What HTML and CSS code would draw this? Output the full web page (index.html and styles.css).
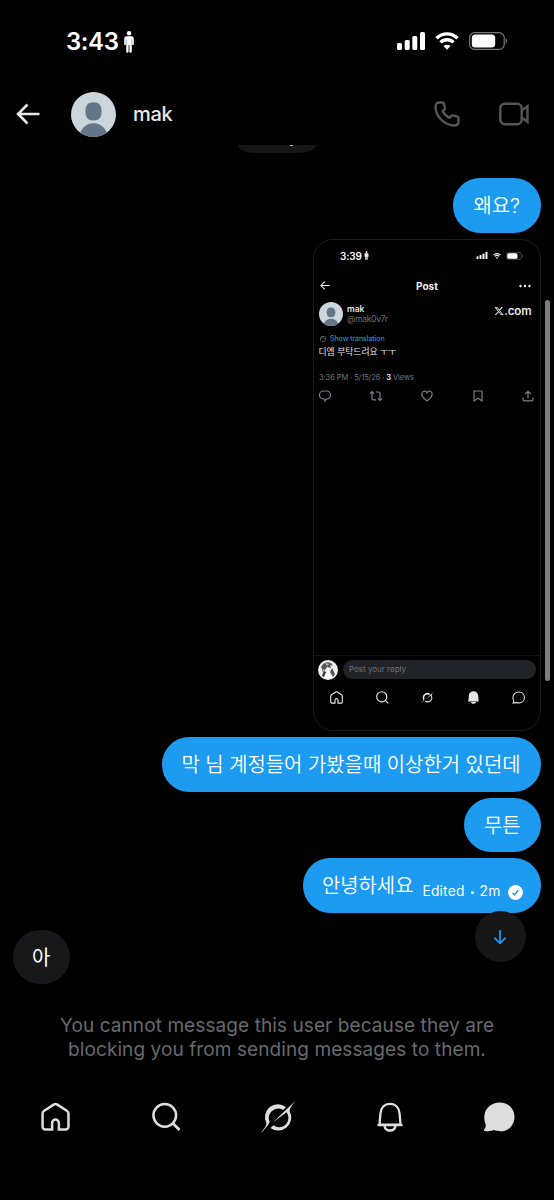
FILE: index.html
```html
<!DOCTYPE html>
<html lang="ko">
<head>
<meta charset="utf-8">
<title>mak</title>
<link rel="stylesheet" href="styles.css">
</head>
<body>
<svg class="defs" aria-hidden="true">
  <symbol id="person" viewBox="0 0 12 22"><circle cx="6" cy="2.3" r="2.2"/><path d="M3.6 5.2h4.8a2.4 2.4 0 0 1 2.4 2.4v5.6a.8.8 0 0 1-1.7 0V8.4h-.3V20.600a1 1 0 0 1-2.400 0v-6.600h-.8v6.600a1 1 0 0 1-2.400 0V8.400h-.3v4.800a.8.8 0 0 1-1.700 0V7.600a2.400 2.400 0 0 1 2.400-2.400z"/></symbol>
  <symbol id="signal" viewBox="0 0 28 18"><rect x="0" y="11" width="5" height="7" rx="1.5"/><rect x="7.700" y="8" width="5" height="10" rx="1.500"/><rect x="15.300" y="4" width="5" height="14" rx="1.500"/><rect x="23" y="0" width="5" height="18" rx="1.500"/></symbol>
  <symbol id="wifi" viewBox="0 0 24 18"><path d="M1.500 6.200a15 15 0 0 1 21 0M5.500 10.400a9.300 9.300 0 0 1 13 0" fill="none" stroke="currentColor" stroke-width="3.300"/><path d="M12 17.700l-3.500-3.600a5 5 0 0 1 7 0z"/></symbol>
  <symbol id="battery" viewBox="0 0 39 18"><rect x=".6" y=".6" width="34.600" height="16.800" rx="5" fill="none" stroke="#777" stroke-width="1.200"/><rect x="2.800" y="2.600" width="23.400" height="12.800" rx="3.500"/><path d="M36.700 6v6c1.700-.7 1.700-5.300 0-6z" fill="#777"/></symbol>
  <symbol id="back" viewBox="0 0 24 22"><path d="M23.500 11H2.200M11.500 1.500L2 11l9.500 9.500" fill="none" stroke="currentColor" stroke-width="2.500"/></symbol>
  <symbol id="avatar" viewBox="0 0 46 46"><circle cx="23" cy="23" r="23" fill="#cbd5dc"/><path d="M23 10.500c5.500 0 8.300 3.200 8.300 9 0 6.500-2.600 9.700-8.300 9.700s-8.300-3.200-8.300-9.700c0-5.800 2.800-9 8.300-9z" fill="#637789"/><path d="M9.500 41.600C12 35.300 17 32 23 32s11 3.300 13.500 9.600a23 23 0 0 1-27 0z" fill="#637789"/></symbol>
  <symbol id="home" viewBox="0 0 30 30"><path d="M15 1.600c.7 0 1.300.2 1.900.6l9.800 6.300c1.100.7 1.700 1.600 1.700 2.900V25a3 3 0 0 1-3 3h-6.900v-6.800a3.500 3.500 0 0 0-7 0V28H4.600a3 3 0 0 1-3-3V11.400c0-1.300.6-2.200 1.700-2.900l9.800-6.300c.6-.4 1.200-.6 1.900-.6z" fill="none" stroke="currentColor" stroke-width="2.600"/></symbol>
  <symbol id="search" viewBox="0 0 30 30"><circle cx="13.200" cy="13.300" r="11.700" fill="none" stroke="currentColor" stroke-width="2.600"/><path d="M21.500 21.500l7 7" fill="none" stroke="currentColor" stroke-width="2.800"/></symbol>
  <symbol id="grok" viewBox="0 0 36 34"><path d="M6.300 22.800A12.800 12.800 0 0 1 26 7.300l-3 2.600A9.400 9.400 0 0 0 9.700 21.900C9 24.500 4.500 29.200 1 33c1.600-3 6.300-7.500 5.300-10.200z"/><path d="M12.700 22.500L35 1.200c-3 4.600-6 7-5.200 10.600A12.900 12.900 0 0 1 10.500 27.900l2.900-2.600a9.300 9.300 0 0 0 13.100-13z"/></symbol>
  <symbol id="bell" viewBox="0 0 28 30"><path d="M3.500 22.600l.9-11C4.900 5.800 8.500 1.900 14 1.900s9.100 3.900 9.600 9.700l.9 11zM1.500 23.200h25M8.600 24c.4 2.800 2.600 4.500 5.400 4.500s5-1.700 5.400-4.500" fill="none" stroke="currentColor" stroke-width="2.300"/></symbol>
  <symbol id="bell-solid" viewBox="0 0 28 30"><path d="M2 24l1.200-13C3.800 4.500 8 .8 14 .8S24.200 4.500 24.800 11L26 24zM8 25.300h12c-.8 2.700-3 4.300-6 4.300s-5.200-1.600-6-4.300z"/></symbol>
  <symbol id="chat" viewBox="0 0 32 30"><path d="M16.700.5C25.500.5 31.500 7 31.500 15S25.500 29.300 17.500 29.300c-2.600 0-4.600-.4-6.500-1.200-2.900 1.200-6.500 1.300-9.300.8-1-.2-1.100-1.200-.4-1.800 1.500-1.300 1.600-3.500 1.100-5.500-.8-2-1.100-4.300-1.100-6.600C1.300 7 7.800.5 16.700.5z"/></symbol>
</svg>
<div class="phone">
  <div class="status">
    <div class="clock"><span>3:43</span><svg class="person"><use href="#person"/></svg></div>
    <div class="indicators">
      <svg class="signal"><use href="#signal"/></svg>
      <svg class="wifi"><use href="#wifi"/></svg>
      <svg class="battery"><use href="#battery"/></svg>
    </div>
  </div>
  <header class="header">
    <svg class="back"><use href="#back"/></svg>
    <svg class="avatar"><use href="#avatar"/></svg>
    <h1 class="name">mak</h1>
    <svg class="call" viewBox="0 0 26 26"><path d="M5.300 1.500h3c.8 0 1.300.4 1.500 1.100l1.200 4.200c.2.600 0 1.100-.4 1.500L8.700 10c1.400 3.100 3.600 5.300 6.700 6.800l2-2c.4-.4.900-.5 1.500-.4l4.500 1.300c.7.200 1.100.7 1.100 1.400v3.500c0 2.300-1.500 3.900-3.900 3.900C10.500 24.500 1.500 15.500 1.500 5.400c0-2.400 1.500-3.900 3.800-3.900z"/></svg>
    <svg class="video" viewBox="0 0 30 24"><rect x="1.300" y="1.800" width="21.400" height="20.400" rx="4.500"/><path d="M22.700 8.500l5.800-4.300v15.600l-5.800-4.300"/></svg>
  </header>
  <main class="chat">
    <div class="day"><span>Today</span></div>
    <div class="bubble first">왜요?</div>
    <article class="shot">
      <div class="shot-status">
        <div class="shot-clock">3:39<svg class="shot-person"><use href="#person"/></svg></div>
        <div class="shot-indicators">
          <svg class="shot-signal"><use href="#signal"/></svg>
          <svg class="shot-wifi"><use href="#wifi"/></svg>
          <svg class="shot-battery"><use href="#battery"/></svg>
        </div>
      </div>
      <div class="shot-header">
        <svg class="shot-back"><use href="#back"/></svg><b>Post</b>
        <svg class="dots" viewBox="0 0 12 4"><circle cx="1.500" cy="2" r="1.200"/><circle cx="6" cy="2" r="1.200"/><circle cx="10.500" cy="2" r="1.200"/></svg>
      </div>
      <div class="author">
        <svg class="shot-avatar"><use href="#avatar"/></svg>
        <div class="who"><b>mak</b><span>@mak0v7r</span></div>
        <div class="brand"><svg class="x-logo" viewBox="0 0 24 24"><path d="M18.244 2.250h3.308l-7.227 8.260 8.502 11.240H16.170l-5.214-6.817L4.990 21.750H1.680l7.730-8.835L1.254 2.250H8.080l4.713 6.231zm-1.161 17.520h1.833L7.084 4.126H5.117z"/></svg>.com</div>
      </div>
      <div class="translate"><svg class="tiny-grok"><use href="#grok"/></svg>Show translation</div>
      <p class="post">디엠 부탁드려요 ㅜㅜ</p>
      <div class="meta">3:36 PM · 5/15/26 · <b>3</b> Views</div>
      <div class="actions">
        <svg viewBox="0 0 12 12"><path d="M4.500 1h3a3.900 3.900 0 0 1 0 8L6 11V9H4.500a4 4 0 0 1 0-8z"/></svg>
        <svg class="wide" viewBox="0 0 14 12"><path d="M.8 3.700L3 1.500l2.200 2.200M3 1.700V8.500c0 .8.500 1.300 1.300 1.300H7M7 2h2.700c.8 0 1.300.5 1.300 1.300v6.500M8.800 8.300L11 10.500l2.200-2.200"/></svg>
        <svg viewBox="0 0 12 12"><path d="M6 10.800C3 9 .8 6.800.8 4.100c0-3 3.700-4 5.200-1.300 1.500-2.700 5.200-1.700 5.200 1.300 0 2.700-2.200 4.900-5.200 6.700z"/></svg>
        <svg viewBox="0 0 12 12"><path d="M2 1h8v10L6 8.200 2 11z"/></svg>
        <svg viewBox="0 0 12 12"><path d="M6 8V1.200M3.200 4L6 1.200 8.800 4M1 7.500v2c0 .8.500 1.300 1.300 1.300h7.400c.8 0 1.300-.5 1.300-1.300v-2"/></svg>
      </div>
      <div class="reply">
        <svg class="me" viewBox="0 0 20 20"><circle cx="10" cy="10" r="10" fill="#eee"/><path d="M3 7c2-4 6-6 10-4l2 3-3-1 1 3-4-1-4 6-1-4zM14 8l3 6-2 3-3-5z" fill="#555"/><path d="M7 3l4 1-2 2zM5 9l2 1-2 2z" fill="#bbb"/><path d="M10 10l2 3 1 5H6z" fill="#fff"/><path d="M6 11l2 1-2 5-2-1z" fill="#333"/></svg>
        <div class="field">Post your reply</div>
      </div>
      <div class="shot-nav">
        <svg><use href="#home"/></svg>
        <svg><use href="#search"/></svg>
        <svg class="g"><use href="#grok"/></svg>
        <svg><use href="#bell-solid"/></svg>
        <svg viewBox="0 0 32 30"><path class="outline" d="M16.700 1.500C25 1.500 30.500 7.500 30.500 15S25 28.300 17.500 28.300c-2.600 0-4.600-.4-6.500-1.200-2 .9-5 1.200-8 1.200 1.800-2 1.700-4.700.6-6.700-.9-2-1.300-4.300-1.300-6.600C2.300 7.500 8.500 1.500 16.700 1.500z"/></svg>
      </div>
    </article>
    <div class="bubble">막 님 계정들어 가봤을때 이상한거 있던데</div>
    <div class="bubble">무튼</div>
    <div class="bubble last">
      <span>안녕하세요</span>
      <small>Edited<i></i>2m</small>
      <svg class="check" viewBox="0 0 15 15"><circle cx="7.500" cy="7.500" r="7.400" fill="#fff"/><path d="M4.600 7.900l2 2 3.700-4.800" fill="none" stroke="#1d9bf0" stroke-width="1.500"/></svg>
      <div class="jump"><svg viewBox="0 0 16 18"><path d="M8 1v15M1.500 9.700L8 16.200l6.500-6.500"/></svg></div>
    </div>
    <div class="bubble incoming">아</div>
    <div class="scrollbar"></div>
  </main>
  <p class="blocked">You cannot message this user because they are<br>blocking you from sending messages to them.</p>
  <nav class="tabs">
    <svg><use href="#home"/></svg>
    <svg><use href="#search"/></svg>
    <svg class="tab-grok"><use href="#grok"/></svg>
    <svg class="tab-bell"><use href="#bell"/></svg>
    <svg class="tab-chat"><use href="#chat"/></svg>
  </nav>
</div>
</body>
</html>
```
FILE: styles.css
```css
* { box-sizing: border-box; }
body { margin: 0; background: #000; color: #e7e7e7; font-family: Inter, "Noto Sans CJK KR", sans-serif; }
svg { display: block; flex: none; fill: currentColor; overflow: visible; }
.defs { position: absolute; width: 0; height: 0; }
.phone { width: 554px; height: 1200px; display: flex; flex-direction: column; overflow: hidden; background: #000; }

.status { height: 83px; padding: 0 46px 0 66px; display: flex; align-items: center; justify-content: space-between; color: #fff; }
.clock { display: flex; align-items: center; gap: 5px; font-size: 24px; font-weight: 600; line-height: 30px; letter-spacing: -0.400px; }
.clock span { width: 52px; white-space: nowrap; }
.person { width: 12px; height: 22px; }
.indicators { display: flex; align-items: center; gap: 10px; margin-top: -1px; }
.signal { width: 28px; height: 18px; }
.wifi { width: 24px; height: 18px; }
.battery { width: 39px; height: 18px; }

.header { height: 62px; padding: 0 25px 0 16px; display: flex; align-items: center; }
.back { width: 24px; height: 22px; margin-right: 31px; }
.avatar { width: 45px; height: 45px; }
.name { margin: 0 auto 0 17px; font-size: 20px; font-weight: 500; line-height: 26px; letter-spacing: -0.300px; }
.call, .video { fill: none; stroke: #555; stroke-width: 2.400; }
.call { width: 26px; height: 26px; margin-right: 39px; }
.video { width: 30px; height: 24px; }

.chat { position: relative; height: 855px; padding: 0 13px; display: flex; flex-direction: column; align-items: flex-end; }
.day { align-self: center; width: 78px; height: 8px; margin-bottom: 25px; overflow: hidden; display: flex; align-items: flex-end; justify-content: center; background: #161616; border-radius: 0 0 18px 18px / 0 0 8px 8px; font-size: 14px; }
.day span { line-height: 20px; height: 25px; }
.bubble { height: 54.500px; margin-bottom: 6px; padding: 2px 20.500px 0 19.500px; border-radius: 27.250px; background: #1d9bf0; color: #fff; font-size: 19.900px; font-weight: 350; line-height: 53px; white-space: nowrap; flex: none; }
.first { padding-right: 21px; padding-left: 20px; }
.last { position: relative; display: flex; padding: 2px 18px 0 19px; margin-bottom: 17px; }
.last small { margin: 11px 7.500px 0 9px; font-size: 13.800px; font-weight: 400; letter-spacing: 0.200px; display: flex; align-items: center; }
.last small i { width: 3px; height: 3px; margin: 1px 6px 0; border-radius: 50%; background: #fff; }
.check { width: 15px; height: 15px; margin-top: 24.500px; }
.jump { position: absolute; right: 15.500px; top: 53px; width: 51px; height: 51px; border-radius: 50%; background: #161616; display: grid; place-items: center; }
.jump svg { width: 14px; height: 16px; fill: none; stroke: #1d9bf0; stroke-width: 2; }
.incoming { align-self: flex-start; width: 57px; padding-left: 19px; background: #16181a; font-weight: 400; }
.scrollbar { position: absolute; left: 545px; top: 155px; width: 5px; height: 381px; border-radius: 3px; background: #7c7c7c; }

.shot { width: 228px; height: 492.500px; margin-bottom: 6px; flex: none; border: 1px solid #1c1c1c; border-radius: 20px; overflow: hidden; display: flex; flex-direction: column; }
.shot-status { height: 32px; padding: 0 17px 0 26px; display: flex; align-items: center; justify-content: space-between; color: #fff; }
.shot-clock { display: flex; align-items: center; gap: 2px; font-size: 10px; font-weight: 600; letter-spacing: -0.100px; }
.shot-person { width: 5px; height: 9px; }
.shot-indicators { display: flex; align-items: center; gap: 5px; }
.shot-signal { width: 12px; height: 7px; }
.shot-wifi { width: 8px; height: 6px; }
.shot-battery { width: 17px; height: 8px; }
.signal, .wifi, .battery { overflow: visible; }
.shot-header { height: 28px; padding: 0 9px 0 6px; display: grid; grid-template-columns: 1fr auto 1fr; align-items: center; font-size: 10px; color: #eee; }
.shot-header b { padding-left: 3px; }
.shot-back { width: 10px; height: 9px; }
.dots { width: 12px; height: 4px; justify-self: end; }
.author { height: 31px; margin-top: 1px; padding: 0 8.500px 0 5px; display: flex; color: #e7e7e7; }
.shot-avatar { width: 24px; height: 24px; margin-top: 1px; }
.who { margin-left: 4px; font-size: 8.500px; line-height: 10px; display: flex; flex-direction: column; padding-top: 3px; }
.who b { font-weight: 600; }
.who span { letter-spacing: -0.250px; }
.who span, .meta { color: #71767b; }
.brand { margin-left: auto; height: 20px; display: flex; align-items: center; font-size: 11.500px; font-weight: 600; letter-spacing: -0.100px; }
.x-logo { width: 10px; height: 10px; }
.translate { height: 14px; padding-left: 5px; display: flex; align-items: center; gap: 3px; color: #1d8ad4; font-size: 7.100px; font-weight: 500; letter-spacing: -0.130px; }
.tiny-grok { width: 8px; height: 8px; color: #71767b; }
.post { margin: 0; padding-left: 4.500px; font-size: 8.800px; line-height: 12px; white-space: nowrap; }
.meta { margin-top: 14px; padding-left: 5px; height: 12px; font-size: 7.500px; letter-spacing: -0.100px; line-height: 12px; white-space: nowrap; }
.meta b { color: #e7e7e7; font-weight: 600; }
.actions { margin-top: 6px; padding: 0 6px 0 4.500px; display: flex; justify-content: space-between; }
.actions svg { width: 12px; height: 12px; fill: none; stroke: #7d8287; stroke-width: 1.150; }
.actions .wide { width: 14px; }
.reply { margin-top: auto; height: 28px; border-top: 1px solid #121212; padding: 0 4px; display: flex; align-items: center; gap: 5px; }
.me { width: 20px; height: 20px; }
.field { flex: 1; height: 19px; padding-left: 6px; border-radius: 10px; background: #202327; color: #71767b; font-size: 8px; line-height: 19px; }
.shot-nav { height: 47px; padding: 8px 15px 0 16px; display: flex; justify-content: space-between; }
.shot-nav svg { width: 13px; height: 13px; }
.shot-nav .outline { fill: none; stroke: currentColor; stroke-width: 2.600; }

.blocked { height: 72px; margin: 0; padding-top: 14px; color: #68696c; font-size: 19px; letter-spacing: 0.090px; line-height: 24px; text-align: center; white-space: nowrap; }
.tabs { height: 100px; padding-top: 30px; display: grid; grid-template-columns: repeat(5, 111px); justify-items: center; color: #dedede; }
.tabs svg { width: 29px; height: 30px; }
.tabs .tab-grok { width: 36px; height: 34px; margin-top: -2px; }
.tabs .tab-bell { width: 28px; margin-left: 2px; }
.tabs .tab-chat { width: 32px; margin-right: 2px; }
```
